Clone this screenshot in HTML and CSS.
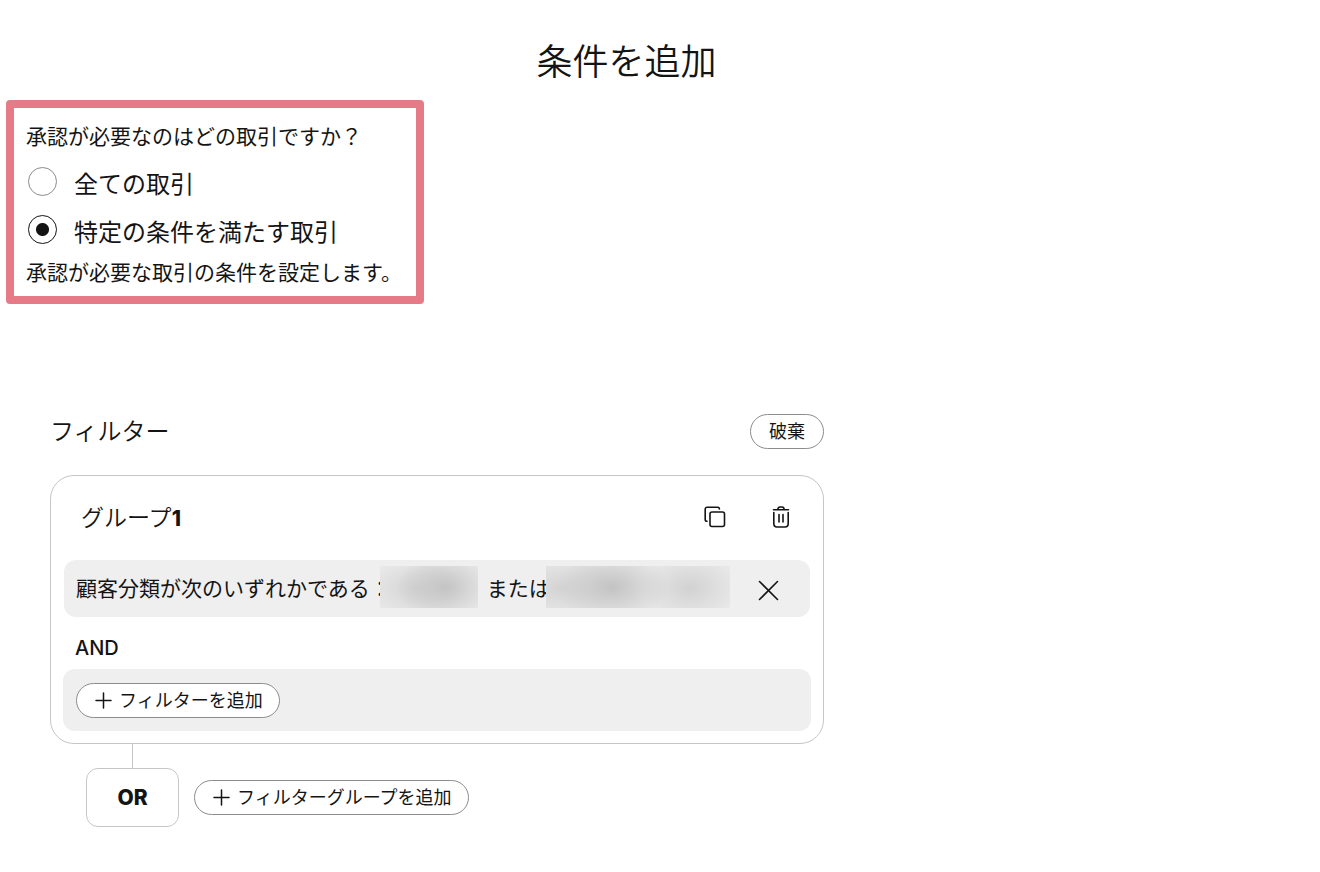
FILE: index.html
```html
<!DOCTYPE html>
<html lang="ja">
<head>
<meta charset="utf-8">
<meta name="viewport" content="width=device-width, initial-scale=1">
<title>条件を追加</title>
<link rel="stylesheet" href="styles.css">
</head>
<body>
<main class="page">
  <h1 class="title">条件を追加</h1>

  <fieldset class="scope">
    <legend class="scope-text scope-question">承認が必要なのはどの取引ですか？</legend>
    <label class="option"><input class="radio" type="radio" name="scope" value="all"><span>全ての取引</span></label>
    <label class="option"><input class="radio" type="radio" name="scope" value="some" checked><span>特定の条件を満たす取引</span></label>
    <p class="scope-text">承認が必要な取引の条件を設定します。</p>
  </fieldset>

  <section class="filters">
    <header class="filters-head">
      <h2 class="heading">フィルター</h2>
      <button class="pill" type="button">破棄</button>
    </header>

    <div class="group">
      <div class="group-head">
        <h3 class="heading group-name">グループ<b class="group-number">1</b></h3>
        <div class="group-actions">
          <button class="icon-button" type="button" aria-label="複製">
            <svg width="24" height="24" viewBox="0 0 24 24" fill="none" stroke="#141414" stroke-width="1.6" stroke-linecap="round" stroke-linejoin="round">
              <rect x="7" y="7" width="14.5" height="14.5" rx="2"/>
              <path d="M4 16.2c-1.2 0-1.8-.7-1.8-1.8V4.2c0-1.3.7-2 2-2h10.4c1.1 0 1.8.6 1.8 1.7"/>
            </svg>
          </button>
          <button class="icon-button" type="button" aria-label="削除">
            <svg width="24" height="24" viewBox="0 0 24 24" fill="none" stroke="#141414" stroke-width="1.6" stroke-linecap="round" stroke-linejoin="round">
              <path d="M4.500 4.700h15M8.800 4.500c.2-1.700 1-2.500 2.200-2.500h2c1.200 0 2 .8 2.200 2.500M4.800 7.500v11c0 2.200 1 3.500 3.200 3.500h8c2.200 0 3.200-1.300 3.200-3.500v-11M10 9.500v7.500M14 9.500v7.500"/>
            </svg>
          </button>
        </div>
      </div>

      <div class="condition">
        <span class="condition-text">顧客分類が次のいずれかである：</span>
        <span class="redacted redacted-short"></span>
        <span class="condition-text condition-or">または</span>
        <span class="redacted redacted-long"></span>
        <button class="icon-button remove" type="button" aria-label="条件を削除">
          <svg width="24" height="24" viewBox="0 0 24 24" fill="none" stroke="#141414" stroke-width="1.6" stroke-linecap="round">
            <path d="M3.500 3.500l18 18M21.500 3.500l-18 18"/>
          </svg>
        </button>
      </div>

      <p class="and">AND</p>

      <div class="add-row">
        <button class="pill pill-add" type="button">
          <svg class="plus" width="16" height="16" viewBox="0 0 16 16" fill="none" stroke="#141414" stroke-width="1.5" stroke-linecap="round"><path d="M8.500 1v15M1 8.500h15"/></svg>
          フィルターを追加
        </button>
      </div>
    </div>

    <div class="connector"></div>
    <div class="or-row">
      <strong class="or">OR</strong>
      <button class="pill pill-add" type="button">
        <svg class="plus" width="16" height="16" viewBox="0 0 16 16" fill="none" stroke="#141414" stroke-width="1.5" stroke-linecap="round"><path d="M8.500 1v15M1 8.500h15"/></svg>
        フィルターグループを追加
      </button>
    </div>
  </section>
</main>
</body>
</html>
```

FILE: styles.css
```css
* {
  box-sizing: border-box;
}

body {
  margin: 0;
  background: #fff;
  color: #141414;
  font-family: "Noto Sans CJK JP", "Liberation Sans", sans-serif;
}

h1, h2, h3, p {
  margin: 0;
  font-weight: 400;
}

button {
  font: inherit;
  color: inherit;
  cursor: pointer;
}

svg {
  display: block;
  flex: none;
  overflow: visible;
}

.page {
  padding: 31px 6px;
}

.title {
  margin: 0 67px 13px 0;
  font-size: 36px;
  line-height: 56px;
  font-weight: 350;
  text-align: center;
}

.scope {
  width: fit-content;
  min-width: 418px;
  margin: 0;
  padding: 11px 12px 9px;
  border: 8px solid #e67a86;
  border-radius: 4px;
}

.scope-text {
  font-size: 21px;
  line-height: 32px;
}

.scope-question {
  float: left;
  width: 100%;
  margin-bottom: 8px;
  padding: 0;
}

.option {
  display: flex;
  clear: both;
  align-items: center;
  gap: 17px;
  height: 48px;
  padding-left: 2px;
  font-size: 24px;
  line-height: 48px;
}

.radio {
  appearance: none;
  width: 29px;
  height: 29px;
  margin: 0 0 4px;
  border: 1px solid #8c8c8c;
  border-radius: 50%;
  background: #fff;
}

.radio:checked {
  border-color: #141414;
  background: radial-gradient(circle, #141414 6px, #fff 7px);
}

.filters {
  max-width: 818px;
  margin-top: 110px;
  padding-left: 44px;
}

.filters-head {
  display: flex;
  align-items: center;
  justify-content: space-between;
  margin-bottom: 26px;
}

.heading {
  padding-bottom: 3px;
  font-size: 24px;
  line-height: 32px;
  font-weight: 350;
}

.pill {
  display: flex;
  align-items: center;
  gap: 8px;
  height: 35px;
  padding: 0 18px 4px;
  border: 1px solid #8c8c8c;
  border-radius: 18px;
  background: #fff;
  font-size: 18px;
  line-height: 28px;
}

.pill-add {
  padding-right: 16px;
}

.plus {
  margin-top: 3px;
}

.group {
  padding: 24px 12px 12px;
  border: 1px solid #c6c6c6;
  border-radius: 24px;
}

.group-head {
  display: flex;
  align-items: center;
  justify-content: space-between;
  height: 34px;
  margin-bottom: 26px;
  padding: 0 18px;
}

.group-name {
  padding-bottom: 0;
  font-size: 23px;
}

.group-number {
  font-family: Inter, sans-serif;
  font-weight: 800;
  font-size: 21px;
}

.group-actions {
  display: flex;
  gap: 42px;
}

.icon-button {
  padding: 0;
  border: 0;
  background: none;
}

.condition {
  display: flex;
  align-items: center;
  height: 57px;
  margin: 0 1px;
  padding: 0 30px 0 12px;
  border-radius: 12px;
  background: #efefef;
  font-size: 21px;
  line-height: 32px;
  white-space: nowrap;
}

.condition-text {
  padding-bottom: 4px;
}

.condition-or {
  margin-left: 9px;
}

.redacted {
  position: relative;
  height: 42px;
  margin-bottom: 4px;
}

.redacted-short {
  width: 98px;
  margin-left: -11px;
  background:
    radial-gradient(ellipse 48px 34px at 66% 50%, #c4c4c4, transparent),
    radial-gradient(ellipse 50px 30px at 36% 54%, #d4d4d4, transparent),
    #e9e9e9;
}

.redacted-long {
  width: 184px;
  margin-left: -4px;
  background:
    radial-gradient(ellipse 56px 36px at 36% 50%, #c3c3c3, transparent),
    radial-gradient(ellipse 50px 34px at 78% 52%, #d2d2d2, transparent),
    radial-gradient(ellipse 60px 32px at 8% 52%, #d4d4d4, transparent),
    #e9e9e9;
}

.remove {
  margin: 2px 0 0 auto;
}

.and {
  padding: 16px 12px 6px;
  font-family: Inter, sans-serif;
  font-size: 20px;
  line-height: 30px;
  font-weight: 500;
}

.add-row {
  padding: 14px 13px 13px;
  border-radius: 12px;
  background: #efefef;
}

.connector {
  width: 1px;
  height: 24px;
  margin-left: 82px;
  background: #c6c6c6;
}

.or-row {
  display: flex;
  align-items: center;
  gap: 15px;
  padding-left: 36px;
}

.or {
  width: 93px;
  border: 1px solid #c6c6c6;
  border-radius: 12px;
  font-family: Inter, sans-serif;
  font-size: 21px;
  line-height: 57px;
  font-weight: 800;
  text-align: center;
}
```
